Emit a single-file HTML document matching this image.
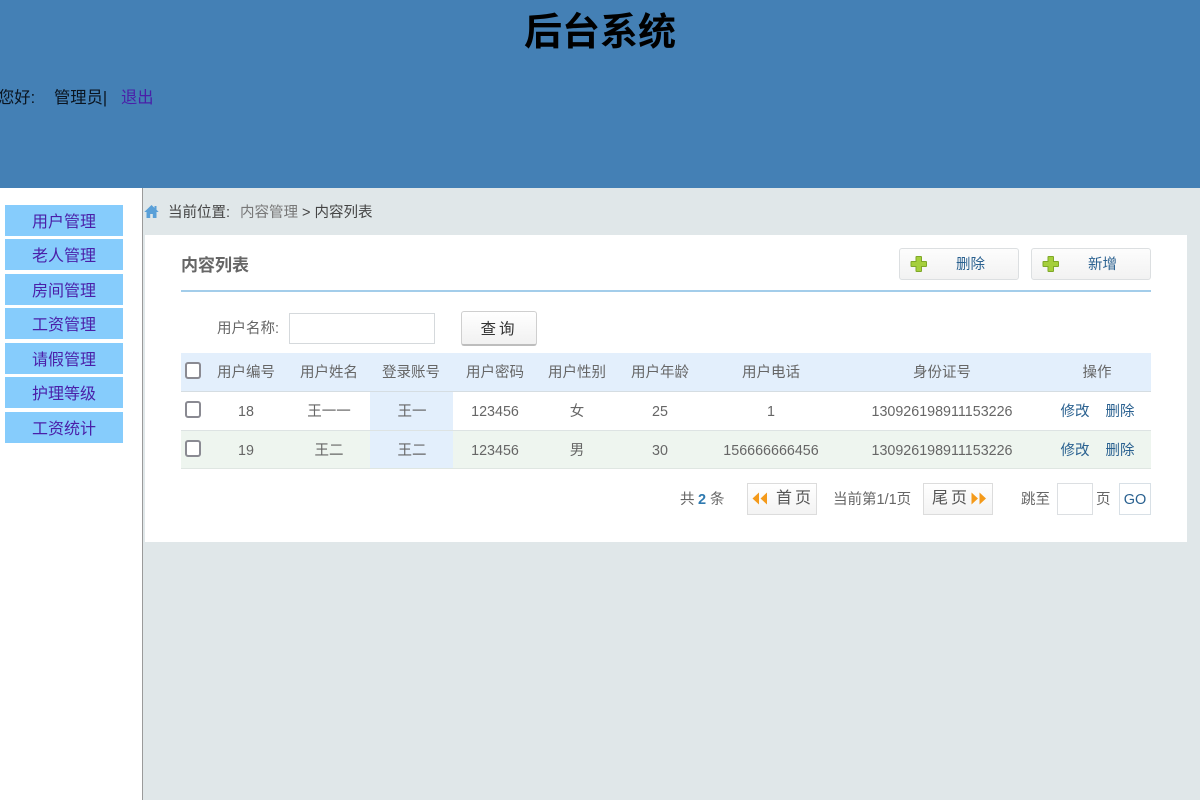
<!DOCTYPE html>
<html lang="zh">
<head>
<meta charset="utf-8">
<title>后台系统</title>
<style>
html,body{margin:0;padding:0;width:1200px;height:800px;overflow:hidden;background:#fff;font-family:"Liberation Sans","Noto Sans CJK SC",sans-serif}
div,span,a{position:absolute;box-sizing:border-box}
.t{white-space:nowrap;line-height:22px;font-size:14.5px;color:#666;transform:translateX(-50%)}
.l{white-space:nowrap;line-height:22px;font-size:14.5px;color:#666}
.m{left:5px;width:118px;height:31px;background:#86ccfc;color:#4a1fa8;font-size:16px;line-height:36px;text-align:center}
.cb{left:185px;width:16px;height:17px;border:2.5px solid #8a8a92;border-radius:3px;background:#fff}
.btn{top:248px;width:120px;height:32px;border:1px solid #dcdfe1;border-radius:3px;background:linear-gradient(#fdfdfd,#f2f2f2)}
.pg{top:483px;height:32px;border:1px solid #dcdcdc;background:linear-gradient(#fff,#f3f3f3)}
.a{color:#2a6190}
.n{font-size:14.3px}
</style>
</head>
<body>
<div style="left:0;top:0;width:1200px;height:188px;background:#4480b5"></div>
<div style="left:0;top:7px;width:1200px;text-align:center;font-size:38px;font-weight:bold;line-height:52px;color:#000">后台系统</div>
<div class="l" style="left:-2px;top:87px;font-size:16.3px;color:#0a1420">您好:</div>
<div class="l" style="left:54px;top:87px;font-size:16.3px;color:#0a1420">管理员|</div>
<div class="l" style="left:121px;top:87px;font-size:16.3px;color:#4a1fa8">退出</div>

<div style="left:0;top:188px;width:142px;height:612px;background:#fff"></div>
<div style="left:142px;top:188px;width:1px;height:612px;background:#9a9a9a"></div>
<div style="left:143px;top:188px;width:1057px;height:612px;background:#e0e7e9"></div>

<div class="m" style="top:205px">用户管理</div>
<div class="m" style="top:239px">老人管理</div>
<div class="m" style="top:274px">房间管理</div>
<div class="m" style="top:308px">工资管理</div>
<div class="m" style="top:343px">请假管理</div>
<div class="m" style="top:377px">护理等级</div>
<div class="m" style="top:412px">工资统计</div>

<svg style="position:absolute;left:144px;top:204px" width="15" height="15" viewBox="0 0 15 15"><path d="M7.500 1 0.300 8h2.200v6h3.700v-4h2.600v4h3.700V8h2.200L12.500 5.800V2h-2v1.900z" fill="#5aa0d8"/></svg>
<div class="l" style="left:168px;top:202px;color:#444">当前位置:</div>
<div class="l" style="left:240px;top:202px;color:#777">内容管理</div>
<div class="l" style="left:302px;top:202px;color:#444">&gt; 内容列表</div>

<div style="left:145px;top:235px;width:1042px;height:307px;background:#fff"></div>
<div class="l" style="left:181px;top:255px;font-size:17px;font-weight:bold;color:#666">内容列表</div>
<div style="left:181px;top:290px;width:970px;height:2px;background:#a3cdea"></div>

<div class="btn" style="left:899px"></div>
<svg style="position:absolute;left:910px;top:255px" width="18" height="18" viewBox="0 0 18 18"><path d="M6.500 1.500h4.500a.6.600 0 0 1 .5.500v4.500H16a.6.600 0 0 1 .5.500v4a.6.600 0 0 1-.5.500h-4.500V16a.6.600 0 0 1-.5.500H6.500a.6.600 0 0 1-.5-.5v-4.500H1.500a.6.600 0 0 1-.5-.5V7a.6.600 0 0 1 .5-.5H6V2a.6.600 0 0 1 .5-.5z" fill="#a5cf3c" stroke="#7fa828" stroke-width="1"/></svg>
<div class="l" style="left:956px;top:254px;color:#2a6190">删除</div>
<div class="btn" style="left:1031px"></div>
<svg style="position:absolute;left:1042px;top:255px" width="18" height="18" viewBox="0 0 18 18"><path d="M6.500 1.500h4.500a.6.600 0 0 1 .5.500v4.500H16a.6.600 0 0 1 .5.500v4a.6.600 0 0 1-.5.500h-4.500V16a.6.600 0 0 1-.5.500H6.500a.6.600 0 0 1-.5-.5v-4.500H1.500a.6.600 0 0 1-.5-.5V7a.6.600 0 0 1 .5-.5H6V2a.6.600 0 0 1 .5-.5z" fill="#a5cf3c" stroke="#7fa828" stroke-width="1"/></svg>
<div class="l" style="left:1088px;top:254px;color:#2a6190">新增</div>

<div class="l" style="left:217px;top:318px;color:#666">用户名称:</div>
<div style="left:289px;top:313px;width:146px;height:31px;border:1px solid #d5d9dc;background:#fff"></div>
<div style="left:461px;top:311px;width:76px;height:35px;border:1px solid #cfcfcf;border-bottom:2px solid #bdbdbd;border-radius:3px;background:linear-gradient(#fff,#f1f1f1)"></div>
<div class="t" style="left:499px;top:319px;color:#333;font-size:15.500px;letter-spacing:3px">查询</div>

<div style="left:181px;top:353px;width:970px;height:38px;background:#e3effc"></div>
<div style="left:181px;top:391px;width:970px;height:1px;background:#d5dde2"></div>
<div style="left:181px;top:392px;width:970px;height:38px;background:#fff"></div>
<div style="left:181px;top:430px;width:970px;height:1px;background:#dde3e3"></div>
<div style="left:181px;top:431px;width:970px;height:38px;background:#eef5ef"></div>
<div style="left:181px;top:468px;width:970px;height:1px;background:#dfe6e2"></div>
<div style="left:370px;top:392px;width:83px;height:38px;background:#e3effc"></div>
<div style="left:370px;top:431px;width:83px;height:37px;background:#e3effc"></div>

<div class="cb" style="top:362px"></div>
<div class="cb" style="top:401px"></div>
<div class="cb" style="top:440px"></div>

<div class="t" style="left:246px;top:362px">用户编号</div>
<div class="t" style="left:329px;top:362px">用户姓名</div>
<div class="t" style="left:411px;top:362px">登录账号</div>
<div class="t" style="left:495px;top:362px">用户密码</div>
<div class="t" style="left:577px;top:362px">用户性别</div>
<div class="t" style="left:660px;top:362px">用户年龄</div>
<div class="t" style="left:771px;top:362px">用户电话</div>
<div class="t" style="left:942px;top:362px">身份证号</div>
<div class="t" style="left:1097px;top:362px">操作</div>

<div class="t n" style="left:246px;top:401px">18</div>
<div class="t" style="left:329px;top:401px">王一一</div>
<div class="t" style="left:412px;top:401px">王一</div>
<div class="t n" style="left:495px;top:401px">123456</div>
<div class="t" style="left:577px;top:401px">女</div>
<div class="t n" style="left:660px;top:401px">25</div>
<div class="t n" style="left:771px;top:401px">1</div>
<div class="t n" style="left:942px;top:401px">130926198911153226</div>
<div class="t a" style="left:1075px;top:401px">修改</div>
<div class="t a" style="left:1120px;top:401px">删除</div>

<div class="t n" style="left:246px;top:440px">19</div>
<div class="t" style="left:329px;top:440px">王二</div>
<div class="t" style="left:412px;top:440px">王二</div>
<div class="t n" style="left:495px;top:440px">123456</div>
<div class="t" style="left:577px;top:440px">男</div>
<div class="t n" style="left:660px;top:440px">30</div>
<div class="t n" style="left:771px;top:440px">156666666456</div>
<div class="t n" style="left:942px;top:440px">130926198911153226</div>
<div class="t a" style="left:1075px;top:440px">修改</div>
<div class="t a" style="left:1120px;top:440px">删除</div>

<div class="l" style="left:680px;top:489px">共</div>
<div class="l" style="left:698px;top:489px;color:#2f7ab0;font-weight:bold">2</div>
<div class="l" style="left:710px;top:489px">条</div>

<div class="pg" style="left:747px;width:70px"></div>
<svg style="position:absolute;left:751px;top:491px" width="18" height="15" viewBox="0 0 18 15"><path d="M8 1.500V13.500L1.500 7.500zM16 1.500V13.500L9.500 7.500z" fill="#f49a1a"/></svg>
<div class="l" style="left:776px;top:488px;font-size:16px;color:#555;letter-spacing:3px">首页</div>
<div class="l" style="left:833px;top:489px">当前第1/1页</div>
<div class="pg" style="left:923px;width:70px"></div>
<div class="l" style="left:932px;top:488px;font-size:16px;color:#555;letter-spacing:3px">尾页</div>
<svg style="position:absolute;left:970px;top:491px" width="18" height="15" viewBox="0 0 18 15"><path d="M1.500 1.500V13.500L8 7.500zM9.500 1.500V13.500L16 7.500z" fill="#f49a1a"/></svg>

<div class="l" style="left:1021px;top:489px">跳至</div>
<div style="left:1057px;top:483px;width:36px;height:32px;border:1px solid #dcdfe2;background:#fff"></div>
<div class="l" style="left:1096px;top:489px">页</div>
<div style="left:1119px;top:483px;width:32px;height:32px;border:1px solid #d8e0e6;background:#fff"></div>
<div class="t a" style="left:1135px;top:489px">GO</div>
</body>
</html>
